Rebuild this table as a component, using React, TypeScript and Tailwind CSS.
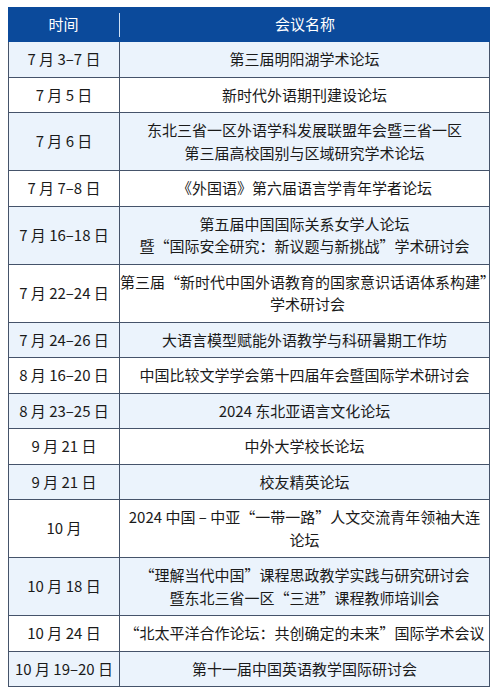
const rows: { date: string; name: string[] }[] = [
  { date: "7 月 3–7 日", name: ["第三届明阳湖学术论坛"] },
  { date: "7 月 5 日", name: ["新时代外语期刊建设论坛"] },
  { date: "7 月 6 日", name: ["东北三省一区外语学科发展联盟年会暨三省一区", "第三届高校国别与区域研究学术论坛"] },
  { date: "7 月 7–8 日", name: ["《外国语》第六届语言学青年学者论坛"] },
  { date: "7 月 16–18 日", name: ["第五届中国国际关系女学人论坛", "暨“国际安全研究：新议题与新挑战”学术研讨会"] },
  { date: "7 月 22–24 日", name: ["第三届“新时代中国外语教育的国家意识话语体系构建”", "学术研讨会"] },
  { date: "7 月 24–26 日", name: ["大语言模型赋能外语教学与科研暑期工作坊"] },
  { date: "8 月 16–20 日", name: ["中国比较文学学会第十四届年会暨国际学术研讨会"] },
  { date: "8 月 23–25 日", name: ["2024 东北亚语言文化论坛"] },
  { date: "9 月 21 日", name: ["中外大学校长论坛"] },
  { date: "9 月 21 日", name: ["校友精英论坛"] },
  { date: "10 月", name: ["2024 中国 – 中亚“一带一路”人文交流青年领袖大连", "论坛"] },
  { date: "10 月 18 日", name: ["“理解当代中国”课程思政教学实践与研究研讨会", "暨东北三省一区“三进”课程教师培训会"] },
  { date: "10 月 24 日", name: ["“北太平洋合作论坛：共创确定的未来”国际学术会议"] },
  { date: "10 月 19–20 日", name: ["第十一届中国英语教学国际研讨会"] },
];

export default function App() {
  return (
    <div
      className="w-[500px] h-[692px] bg-white pt-[7px] pl-[8px] text-[15px] text-[#1a1a1a]"
      style={{ fontFamily: '"Noto Sans CJK SC", sans-serif' }}
    >
      <div className="w-[482px]">
        {/* header */}
        <div className="flex h-[35px] items-center bg-[#0b4a9b] text-white">
          <div className="w-[111px] text-center">时间</div>
          <div className="w-px h-[24px] bg-[#cfe0f4]" />
          <div className="flex-1 text-center">会议名称</div>
        </div>

        <div className="border-x border-b border-[#45536a]">
          {rows.map((r, i) => (
            <div
              key={i}
              className={`flex ${i < rows.length - 1 ? "border-b border-[#45536a]" : ""} ${
                i % 2 === 0 ? "bg-[#ebf3fc]" : "bg-white"
              }`}
            >
              <div className="w-[111px] shrink-0 flex items-center justify-center border-r border-[#45536a] leading-[22.5px] whitespace-nowrap">
                {r.date}
              </div>
              <div className="flex-1 py-[6px] text-center leading-[22.5px] whitespace-nowrap">
                {r.name.map((l) => (
                  <div key={l}>{l}</div>
                ))}
              </div>
            </div>
          ))}
        </div>
      </div>
    </div>
  );
}
